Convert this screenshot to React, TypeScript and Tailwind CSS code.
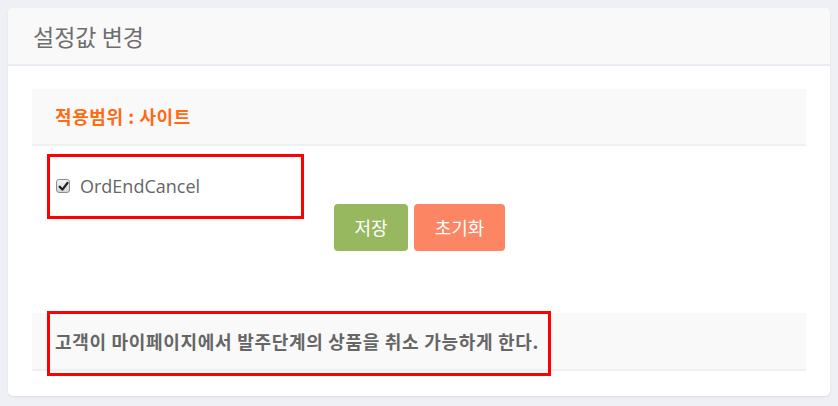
import React from "react";

export default function App() {
  const kr = { fontFamily: '"Noto Sans CJK KR", "Noto Sans", sans-serif' };
  return (
    <div className="w-[838px] h-[406px] bg-[#eef0f5] pt-2 pl-2" style={kr}>
      <div className="relative w-[822px] h-[388px] bg-white rounded-[5px] shadow-[0_1px_2px_rgba(0,0,0,0.08)] overflow-hidden">
        <div className="h-[58px] bg-[#f9f9f9] border-b-2 border-[#e8edf3] px-[25px] flex items-center text-[23px] text-[#6e6e6e]">
          설정값 변경
        </div>
        <div className="px-6 pt-[23px]">
          <div className="h-[57px] bg-[#f9f9f9] border-b-2 border-[#eef0f4] px-[23px] flex items-center text-[18px] tracking-[0.6px] font-bold text-[#ff6a13]">
            적용범위 : 사이트
          </div>
          <div className="h-[28px] mt-[26px] flex items-center pl-[24px]">
            <span className="w-[14px] h-[14px] rounded-[3px] border border-[#8e8e8e] bg-gradient-to-b from-[#f4f4f4] to-[#d4d4d4] flex items-center justify-center">
              <svg width="11" height="11" viewBox="0 0 10 10">
                <path d="M1.5 5.2 L4 7.8 L8.6 1.8" fill="none" stroke="#222" strokeWidth="2" strokeLinecap="round" strokeLinejoin="round" />
              </svg>
            </span>
            <span className="ml-[10px] text-[18px] text-[#666]" style={{ fontFamily: '"Open Sans", sans-serif' }}>
              OrdEndCancel
            </span>
          </div>
          <div className="mt-[4px] flex justify-center gap-[6px] pl-[1px]">
            <button className="w-[74px] h-[47px] rounded-[4px] bg-[#97b85f] text-white text-[18px]">저장</button>
            <button className="w-[91px] h-[47px] rounded-[4px] bg-[#fc8563] text-white text-[18px]">초기화</button>
          </div>
          <div className="mt-[62px] h-[58px] bg-[#f9f9f9] border-b-2 border-[#eef0f4] px-[23px] flex items-center text-[18px] tracking-[0.7px] font-semibold text-[#666]">
            고객이 마이페이지에서 발주단계의 상품을 취소 가능하게 한다.
          </div>
        </div>
        <div className="absolute left-[39px] top-[146px] w-[257px] h-[65px] border-[3px] border-[#f00]" />
        <div className="absolute left-[39px] top-[303px] w-[504px] h-[65px] border-[3px] border-[#f00]" />
      </div>
    </div>
  );
}
